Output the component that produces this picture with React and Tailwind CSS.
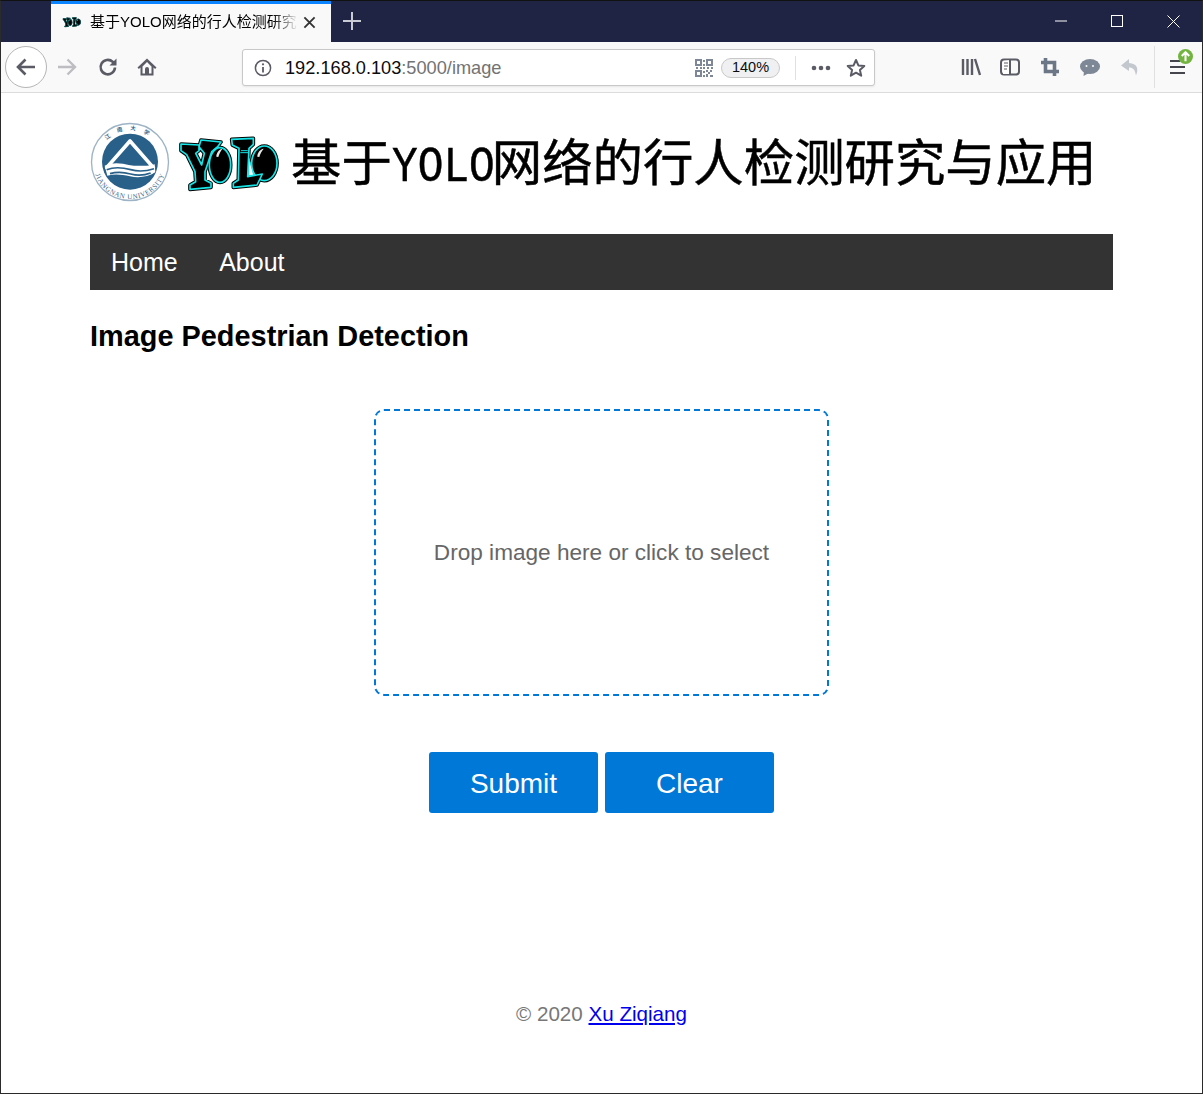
import React from "react";

const ic = "#5b5b66";

const yShape = "M18 42 L72 45 L72 62 L62 70 L80 105 L88 70 L72 50 L78 30 L138 36 L128 50 L110 65 L90 125 L90 150 L108 160 L108 172 L45 178 L45 165 L62 155 L60 125 L35 74 L18 62 Z";
const lShape = "M170 28 L235 25 L235 43 L222 55 L218 140 L262 132 L246 165 L175 172 L175 160 L190 150 L192 55 L172 45 Z";

function YoloLogo({ className }) {
  const shapes = (
    <>
      <path d={yShape} />
      <ellipse cx="135" cy="105" rx="32" ry="52" />
      <ellipse cx="268" cy="100" rx="38" ry="52" />
      <path d={lShape} />
    </>
  );
  return (
    <svg viewBox="0 0 330 198" className={className}>
      <g fill="#000" stroke="#000" strokeWidth="11" strokeLinejoin="round">{shapes}</g>
      <g fill="#000" stroke="#16e4e6" strokeWidth="5" strokeLinejoin="round">{shapes}</g>
      <path d="M198 62h20M196 68h24" stroke="#16e4e6" strokeWidth="3" fill="none" />
      <path d="M222 85 L236 135 L220 137 Z" fill="#fff" stroke="#16e4e6" strokeWidth="3" />
      <path d="M124 80c0-12 8-22 18-24-5 8-10 16-12 25z" fill="#e8e8e8" />
      <path d="M247 80c0-12 8-22 19-24-6 8-11 16-13 25z" fill="#e8e8e8" />
    </svg>
  );
}

function Emblem({ className }) {
  return (
    <svg viewBox="0 0 252 252" className={className}>
      <circle cx="126" cy="123" r="115.500" fill="#fff" stroke="#9db4c6" strokeWidth="4" />
      <circle cx="126" cy="122" r="84" fill="#28608a" />
      <path id="emb-b" d="M15 123A111 111 0 0 0 237 123" fill="none" />
      <path id="emb-t" d="M32 122A94 94 0 0 1 220 122" fill="none" />
      <text fontFamily="'Liberation Serif', serif" fontSize="21" fill="#3d6a8c">
        <textPath href="#emb-b" startOffset="50%" textAnchor="middle" letterSpacing="1.800">JIANGNAN UNIVERSITY</textPath>
      </text>
      <text fontFamily="'Noto Sans CJK SC', sans-serif" fontSize="17" fill="#3d6a8c" fontWeight="700">
        <textPath href="#emb-t" startOffset="50%" textAnchor="middle" letterSpacing="22">江南大学</textPath>
      </text>
      <path d="M126 60 56 140H196Z" fill="#28608a" stroke="#fff" strokeWidth="11" strokeLinejoin="round" />
      <path d="M50 134c24-10 48-8 76-1s46 4 74-3l2 24c-22 14-50 18-76 12s-46-8-68-2z" fill="#fff" />
      <path d="M56 146c24-9 46-7 72 0s46 5 70-3M66 158c20-6 40-5 62 1s42 4 60-3" fill="none" stroke="#28608a" strokeWidth="5" />
    </svg>
  );
}

function TitleBar() {
  return (
    <div className="flex h-[41px] bg-[#1f2344] shrink-0">
      <div className="w-[50px]" />
      <div className="w-[280px] bg-[#f9f9fa] border-t-[3px] border-[#0a84ff] flex items-center pl-[11px] pr-[12px] pb-[2px]">
        <YoloLogo className="w-[20px] h-[12px] shrink-0" />
        <div className="ml-[8px] w-[208px] overflow-hidden whitespace-nowrap text-[15px] text-black leading-[20px] font-['Liberation_Sans','Noto_Sans_CJK_SC',sans-serif] [mask-image:linear-gradient(to_right,black_88%,transparent)]">
          基于YOLO网络的行人检测研究与应用
        </div>
        <svg viewBox="0 0 14 14" className="w-[13px] h-[13px] ml-[5px] shrink-0">
          <path d="M1.500 1.500l11 11M12.500 1.500l-11 11" stroke="#333" strokeWidth="2" />
        </svg>
      </div>
      <div className="flex items-center justify-center w-[42px] pb-[1px]">
        <svg viewBox="0 0 18 18" className="w-[18px] h-[18px]">
          <path d="M9 0v18M0 9h18" stroke="#c8cad4" strokeWidth="2" />
        </svg>
      </div>
      <div className="flex-1" />
      <div className="flex items-center h-full pb-[1px] pl-[1px]">
        <div className="w-[56px] flex justify-center">
          <svg width="12" height="2"><path d="M0 1h12" stroke="#fff" strokeWidth="1" /></svg>
        </div>
        <div className="w-[56px] flex justify-center">
          <div className="w-[12px] h-[12px] border border-white" />
        </div>
        <div className="w-[57px] flex justify-center pr-[1px]">
          <svg width="13" height="13"><path d="M.5.5l12 12M12.500.5l-12 12" stroke="#fff" strokeWidth="1" /></svg>
        </div>
      </div>
    </div>
  );
}

function Toolbar() {
  return (
    <div className="flex items-center h-[51px] bg-[#f9f9fa] border-b border-[#dcdcde] shrink-0 relative">
      <div className="ml-[4px] w-[42px] h-[42px] rounded-full border border-[#b5b5b5] bg-white flex items-center justify-center shrink-0">
        <svg viewBox="0 0 20 20" className="w-[20px] h-[20px]">
          <path d="M19 10H2M9.500 2.500 2 10l7.500 7.500" fill="none" stroke={ic} strokeWidth="2.600" />
        </svg>
      </div>
      <svg viewBox="0 0 20 20" className="w-[20px] h-[20px] ml-[10px] shrink-0">
        <path d="M1 10h17M10.500 2.500 18 10l-7.500 7.500" fill="none" stroke="#bdbdc2" strokeWidth="2.400" />
      </svg>
      <svg viewBox="0 0 20 20" className="w-[20px] h-[20px] ml-[21px] shrink-0">
        <path d="M17 10.500a7.200 7.200 0 1 1-2.200-5.600L17.500 7" fill="none" stroke={ic} strokeWidth="2.600" />
        <path d="M18.500 1.500v7h-7z" fill={ic} />
      </svg>
      <svg viewBox="0 0 20 20" className="w-[20px] h-[20px] ml-[19px] shrink-0">
        <path d="M10 1.500 .5 10.500l1.400 1.400L3.500 10.400V18.500h13v-8.100l1.600 1.500 1.400-1.400z" fill={ic} />
        <path d="M5.500 9.500 10 5l4.500 4.500v7h-2.500v-4.500a2 2 0 0 0-4 0v4.500h-2.500z" fill="#f9f9fa" />
      </svg>
      <div className="ml-[85px] mt-[1px] w-[633px] h-[37px] bg-white border border-[#c8c8c8] rounded-[3px] flex items-center shrink-0 shadow-[0_1px_2px_rgba(0,0,0,0.08)]">
        <svg viewBox="0 0 18 18" className="w-[18px] h-[18px] ml-[11px] shrink-0">
          <circle cx="9" cy="9" r="7.600" fill="none" stroke={ic} strokeWidth="1.500" />
          <path d="M9 8v5.500" stroke={ic} strokeWidth="1.800" />
          <circle cx="9" cy="5.300" r="1.100" fill={ic} />
        </svg>
        <div className="ml-[13px] text-[18.200px] leading-[24px] text-[#0c0c0d] whitespace-nowrap font-['Liberation_Sans',sans-serif]">
          192.168.0.103<span className="text-[#737373]">:5000/image</span>
        </div>
        <div className="flex-1" />
        <svg viewBox="0 0 18 18" className="w-[18px] h-[18px] shrink-0">
          <g fill="#7d8795">
            <path fillRule="evenodd" d="M0 0h7v7H0zM2 2v3h3V2zM11 0h7v7h-7zM13 2v3h3V2zM0 11h7v7H0zM2 13v3h3v-3z" />
            <path d="M8 1h2v2H8zM8 5h2v2H8zM1 8h2v2H1zM5 8h2v2H5zM8 8h2v2H8zM12 8h2v2h-2zM16 8h2v2h-2zM8 12h2v2H8zM11 11h2v2h-2zM15 11h2v2h-2zM13 13h2v2h-2zM8 16h2v2H8zM11 15h2v3h-2zM15 16h3v2h-3z" />
          </g>
        </svg>
        <div className="ml-[8px] w-[59px] h-[20px] rounded-full border border-[#c8c8c8] bg-[#f0f0f2] flex items-center justify-center text-[14.500px] text-[#0c0c0d] font-['Liberation_Sans',sans-serif] shrink-0">
          140%
        </div>
        <div className="ml-[15px] w-px h-[24px] bg-[#e0e0e2] shrink-0" />
        <svg viewBox="0 0 20 6" className="w-[20px] h-[6px] ml-[15px] shrink-0">
          <circle cx="3" cy="3" r="2.300" fill={ic} />
          <circle cx="10" cy="3" r="2.300" fill={ic} />
          <circle cx="17" cy="3" r="2.300" fill={ic} />
        </svg>
        <svg viewBox="0 0 20 20" className="w-[20px] h-[20px] ml-[15px] mr-[8px] shrink-0">
          <path d="M10 2l2.400 5.400 5.900.6-4.400 3.900 1.300 5.800L10 14.700l-5.200 3 1.300-5.800L1.700 8l5.900-.6z" fill="none" stroke={ic} strokeWidth="2" strokeLinejoin="round" />
        </svg>
      </div>
      <svg viewBox="0 0 20 18" className="w-[20px] h-[18px] ml-[86px] shrink-0">
        <path d="M2 1v16M6.500 1v16M11 1v16M14 1l5 16" stroke={ic} strokeWidth="2.400" fill="none" />
      </svg>
      <svg viewBox="0 0 20 18" className="w-[20px] h-[18px] ml-[19px] shrink-0">
        <rect x="1" y="1.500" width="18" height="15" rx="3" fill="none" stroke={ic} strokeWidth="2" />
        <path d="M10 2v14H3V3z" fill="#fff" />
        <path d="M10 2v14" stroke={ic} strokeWidth="2" />
        <path d="M4 5h4M4 8h4M4 11h3" stroke={ic} strokeWidth="1" />
      </svg>
      <svg viewBox="0 0 18 18" className="w-[18px] h-[18px] ml-[21px] shrink-0">
        <path d="M4.500 0v13.500H18M0 4.500h13.500V18" fill="none" stroke="#6b7686" strokeWidth="3.600" />
      </svg>
      <svg viewBox="0 0 20 17" className="w-[20px] h-[17px] ml-[21px] shrink-0">
        <ellipse cx="10" cy="7.500" rx="10" ry="7.500" fill="#7d8795" />
        <path d="M4 12l-.5 5 5.500-3z" fill="#7d8795" />
        <circle cx="6.500" cy="7" r="1" fill="#f9f9fa" />
        <circle cx="13" cy="7" r="1" fill="#f9f9fa" />
      </svg>
      <svg viewBox="0 0 18 17" className="w-[18px] h-[17px] ml-[21px] shrink-0">
        <path d="M8 0 0 6.500 8 12V8.500c4 0 6 2 7 8 3-7 1-12-7-12.500z" fill="#c3c7ce" />
      </svg>
      <div className="ml-[15px] w-px h-[42px] bg-[#e0e0e2] shrink-0" />
      <div className="relative ml-[15px] w-[16px] h-[16px] shrink-0 flex flex-col justify-between py-[1px]">
        <div className="h-[2px] w-[10px] bg-[#45454d]" />
        <div className="h-[2px] w-[15px] bg-[#45454d]" />
        <div className="h-[2px] w-[15px] bg-[#45454d]" />
        <svg viewBox="0 0 16 16" className="absolute left-[8px] top-[-10px] w-[15px] h-[15px]">
          <circle cx="8" cy="8" r="8" fill="#72b43f" />
          <path d="M8 13V4M4 7.500 8 3.500l4 4" fill="none" stroke="#fff" strokeWidth="2.200" />
        </svg>
      </div>
    </div>
  );
}

export default function App() {
  return (
    <div className="w-[1203px] h-[1094px] border border-[#2b2b2b] border-t-[#111] flex flex-col bg-white overflow-hidden font-['Liberation_Sans',sans-serif]">
      <TitleBar />
      <Toolbar />
      <main className="flex-1 flex flex-col pl-[89px] pr-[89px]">
        <header className="flex items-center h-[141px] pb-[1px]">
          <Emblem className="w-[84px] h-[84px] shrink-0 -ml-[2px]" />
          <YoloLogo className="w-[110px] h-[66px] ml-[3px] shrink-0" />
          <h1 className="ml-[6px] mt-[10px] text-[50.400px] leading-[60px] font-normal text-black whitespace-nowrap font-['Liberation_Mono','Noto_Sans_CJK_SC',monospace] [-webkit-text-stroke:0.5px_black]">
            基于<span className="inline-block w-[100px] origin-left scale-x-[0.85]">YOLO</span>网络的行人检测研究与应用
          </h1>
        </header>
        <nav className="h-[56px] bg-[#333] flex items-center pl-[21px] pt-[2px] text-[25px] text-white gap-[41.500px]">
          <span>Home</span>
          <span>About</span>
        </nav>
        <h2 className="mt-[28px] text-[28.900px] leading-[36px] font-bold text-black">Image Pedestrian Detection</h2>
        <div className="mt-[55px] self-center w-[455px] h-[287px] border-2 border-dashed border-[#0078d7] rounded-[10px] flex items-center justify-center text-[22.600px] text-[#666]">
          Drop image here or click to select
        </div>
        <div className="mt-[56px] flex justify-center gap-[7px]">
          <button className="w-[169px] h-[61px] bg-[#0078d7] rounded-[3px] pt-[2px] text-white text-[28px]">Submit</button>
          <button className="w-[169px] h-[61px] bg-[#0078d7] rounded-[3px] pt-[2px] text-white text-[28px]">Clear</button>
        </div>
        <footer className="mt-[187px] text-center text-[20.600px] leading-[28px] text-[#777]">
          © 2020 <a href="#" className="text-[#0000ee] underline">Xu Ziqiang</a>
        </footer>
      </main>
    </div>
  );
}
